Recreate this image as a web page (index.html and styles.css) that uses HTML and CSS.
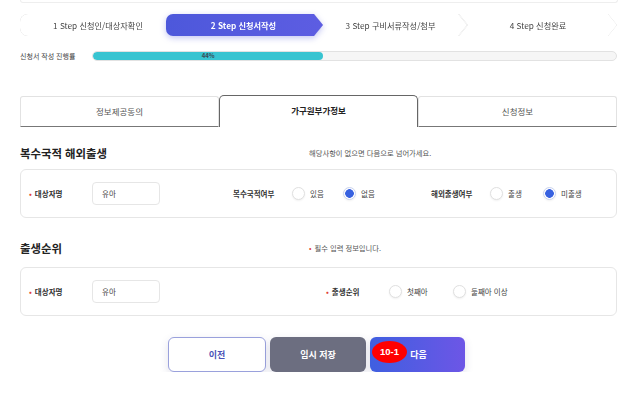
FILE: index.html
```html
<!DOCTYPE html>
<html lang="ko">
<head>
    <meta charset="UTF-8">
    <title>신청서 작성</title>
    <link rel="stylesheet" href="styles.css">
</head>
<body>
    <div class="top-card"></div>
    <div class="wrap">
        <ul class="steps">
            <li class="step step-first"><div class="shape">1 Step 신청인/대상자확인</div></li>
            <li class="step step-on"><div class="shape">2 Step 신청서작성</div></li>
            <li class="step step-mid"><div class="shape">3 Step 구비서류작성/첨부</div></li>
            <li class="step step-last"><div class="shape">4 Step 신청완료</div></li>
        </ul>

        <div class="progress">
            <span class="progress-label">신청서 작성 진행률</span>
            <div class="bar"><div class="bar-fill" style="width: 44%">44%</div></div>
        </div>

        <ul class="tabs">
            <li class="tab">정보제공동의</li>
            <li class="tab tab-on">가구원부가정보</li>
            <li class="tab">신청정보</li>
        </ul>

        <div class="sec-head">
            <h3>복수국적 해외출생</h3>
            <p class="hint">해당사항이 없으면 다음으로 넘어가세요.</p>
        </div>
        <div class="card">
            <span class="lbl req">대상자명</span>
            <div class="inp">유아</div>
            <div class="group g1">
                <span class="glabel">복수국적여부</span>
                <label class="opt"><i class="radio"></i>있음</label>
                <label class="opt"><i class="radio checked"></i>없음</label>
            </div>
            <div class="group g2">
                <span class="glabel">해외출생여부</span>
                <label class="opt"><i class="radio"></i>출생</label>
                <label class="opt"><i class="radio checked"></i>미출생</label>
            </div>
        </div>

        <div class="sec-head sec-two">
            <h3>출생순위</h3>
            <p class="hint req">필수 입력 정보입니다.</p>
        </div>
        <div class="card card-two">
            <span class="lbl req">대상자명</span>
            <div class="inp">유아</div>
            <div class="group g3">
                <span class="lbl req">출생순위</span>
                <label class="opt opt-wide"><i class="radio"></i>첫째아</label>
                <label class="opt opt-auto"><i class="radio"></i>둘째아 이상</label>
            </div>
        </div>

        <div class="buttons">
            <button class="btn btn-prev">이전</button>
            <button class="btn btn-save">임시 저장</button>
            <button class="btn btn-next"><span class="badge">10-1</span>다음</button>
        </div>
    </div>
</body>
</html>
```

FILE: styles.css
```css
* {
    padding: 0;
    margin: 0;
    box-sizing: border-box;
}
body {
    background: #fff;
    font-family: "Noto Sans CJK KR", "Noto Sans", sans-serif;
    color: #333;
    font-size: 8px;
}
ul {
    list-style: none;
}
.top-card {
    height: 3px;
    margin: 0 20px;
    border: 1px solid #eee;
    border-top: none;
    border-radius: 0 0 6px 6px;
}
.wrap {
    margin: 0 21px 0 20px;
}

/* steps */
.steps {
    display: flex;
    height: 22px;
    margin-top: 11px;
}
.step {
    filter: drop-shadow(0 0 0.7px #c4c4c4);
}
.step .shape {
    height: 22px;
    line-height: 22px;
    text-align: center;
    background: #fff;
    font-size: 8.2px;
    color: #444;
    white-space: nowrap;
}
.step-first {
    width: 156px;
    position: relative;
    z-index: 1;
}
.step-first .shape {
    border-radius: 8px 0 0 8px;
}
.step-on {
    width: 157px;
    margin-left: -10px;
    position: relative;
    z-index: 3;
    filter: drop-shadow(0 2px 3px rgba(80, 90, 220, 0.35));
}
.step-on .shape {
    border-radius: 7px 0 0 7px;
    background: linear-gradient(90deg, #4d58db, #5d5de2);
    color: #fff;
    font-weight: bold;
    clip-path: polygon(0 0, calc(100% - 9px) 0, 100% 50%, calc(100% - 9px) 100%, 0 100%);
    padding-right: 2px;
}
.step-mid {
    width: 153px;
    margin-left: -9px;
    position: relative;
    z-index: 2;
}
.step-last {
    width: 158px;
    margin-left: -8px;
}
.step-mid .shape,
.step-last .shape {
    clip-path: polygon(0 0, calc(100% - 9px) 0, 100% 50%, calc(100% - 9px) 100%, 0 100%, 9px 50%);
}

/* progress */
.progress {
    display: flex;
    align-items: center;
    margin-top: 15px;
}
.progress-label {
    width: 72px;
    font-size: 7px;
    color: #444;
}
.bar {
    flex: 1;
    height: 10px;
    border: 1px solid #e2e2e2;
    border-radius: 5px;
    background: #f6f6f6;
    overflow: hidden;
}
.bar-fill {
    height: 100%;
    border-radius: 5px;
    background: #38c4d1;
    font-size: 6px;
    font-weight: bold;
    line-height: 8px;
    text-align: center;
    color: #3b4a55;
}

/* tabs */
.tabs {
    display: flex;
    align-items: flex-end;
    margin-top: 34px;
    height: 32px;
}
.tab {
    flex: 1;
    height: 31px;
    line-height: 29px;
    text-align: center;
    font-size: 8.5px;
    color: #555;
    border: 1px solid #e2e2e2;
    border-bottom: 1.5px solid #777;
    border-radius: 3px 3px 0 0;
}
.tab-on {
    height: 32px;
    border: 1px solid #666;
    border-bottom: none;
    border-radius: 5px 5px 0 0;
    color: #222;
    font-weight: bold;
}

/* sections */
.sec-head {
    display: flex;
    align-items: center;
    margin-top: 18px;
    height: 16px;
}
.sec-two {
    margin-top: 22px;
}
.sec-head h3 {
    width: 289px;
    font-size: 11.4px;
    font-weight: 600;
    color: #222;
}
.hint {
    font-size: 7.3px;
    color: #555;
}
.req::before {
    content: "•";
    color: #e0413a;
    margin-right: 3px;
}
.card {
    display: flex;
    align-items: center;
    height: 49px;
    margin-top: 8px;
    padding-left: 8px;
    border: 1px solid #e6e6e6;
    border-radius: 6px;
}
.card-two {
    margin-top: 11px;
}
.lbl {
    width: 63px;
    font-weight: bold;
    font-size: 7.5px;
    color: #333;
}
.inp {
    width: 68px;
    height: 23px;
    line-height: 21px;
    padding-left: 9px;
    border: 1px solid #e6e6e6;
    border-radius: 4px;
    font-size: 7.5px;
    color: #444;
}
.group {
    display: flex;
    align-items: center;
}
.g1 {
    margin-left: 73px;
}
.g2 {
    margin-left: 37px;
}
.g3 {
    margin-left: 166px;
}
.glabel {
    width: 59px;
    font-weight: bold;
    font-size: 7.5px;
}
.opt {
    display: flex;
    align-items: center;
    gap: 5px;
    width: 51px;
    font-size: 7.5px;
    color: #444;
    white-space: nowrap;
}
.g2 .opt {
    width: 53px;
}
.opt-wide {
    width: 64px;
}
.opt-auto {
    width: auto;
}
.radio {
    width: 13px;
    height: 13px;
    border-radius: 50%;
    border: 1px solid #e0e0e0;
    background: #fff;
    box-shadow: 0 1px 2px rgba(0, 0, 0, 0.06);
}
.radio.checked {
    border-color: #c9d2ee;
    background: radial-gradient(circle, #3761e0 0, #3761e0 4px, #fff 4.6px);
}

/* buttons */
.buttons {
    display: flex;
    justify-content: center;
    gap: 4px;
    margin-top: 21px;
    padding-right: 4px;
}
.btn {
    height: 35px;
    border-radius: 6px;
    border: none;
    font-family: inherit;
    font-size: 9px;
    font-weight: bold;
    box-shadow: 0 3px 8px rgba(60, 60, 120, 0.15);
}
.btn-prev {
    width: 98px;
    background: #fff;
    border: 1px solid #9aa1dc;
    color: #4b53b8;
}
.btn-save {
    width: 96px;
    background: #6c6e80;
    color: #fff;
}
.btn-next {
    width: 95px;
    position: relative;
    background: linear-gradient(90deg, #3f5fe0, #6d56e6);
    color: #fff;
    padding-left: 2px;
}
.badge {
    position: absolute;
    left: 2px;
    top: 4px;
    width: 35px;
    height: 22px;
    line-height: 22px;
    border-radius: 50%;
    background: #ff0000;
    color: #fff;
    font-size: 9.5px;
    font-weight: bold;
    font-family: "Liberation Sans", sans-serif;
}
```
